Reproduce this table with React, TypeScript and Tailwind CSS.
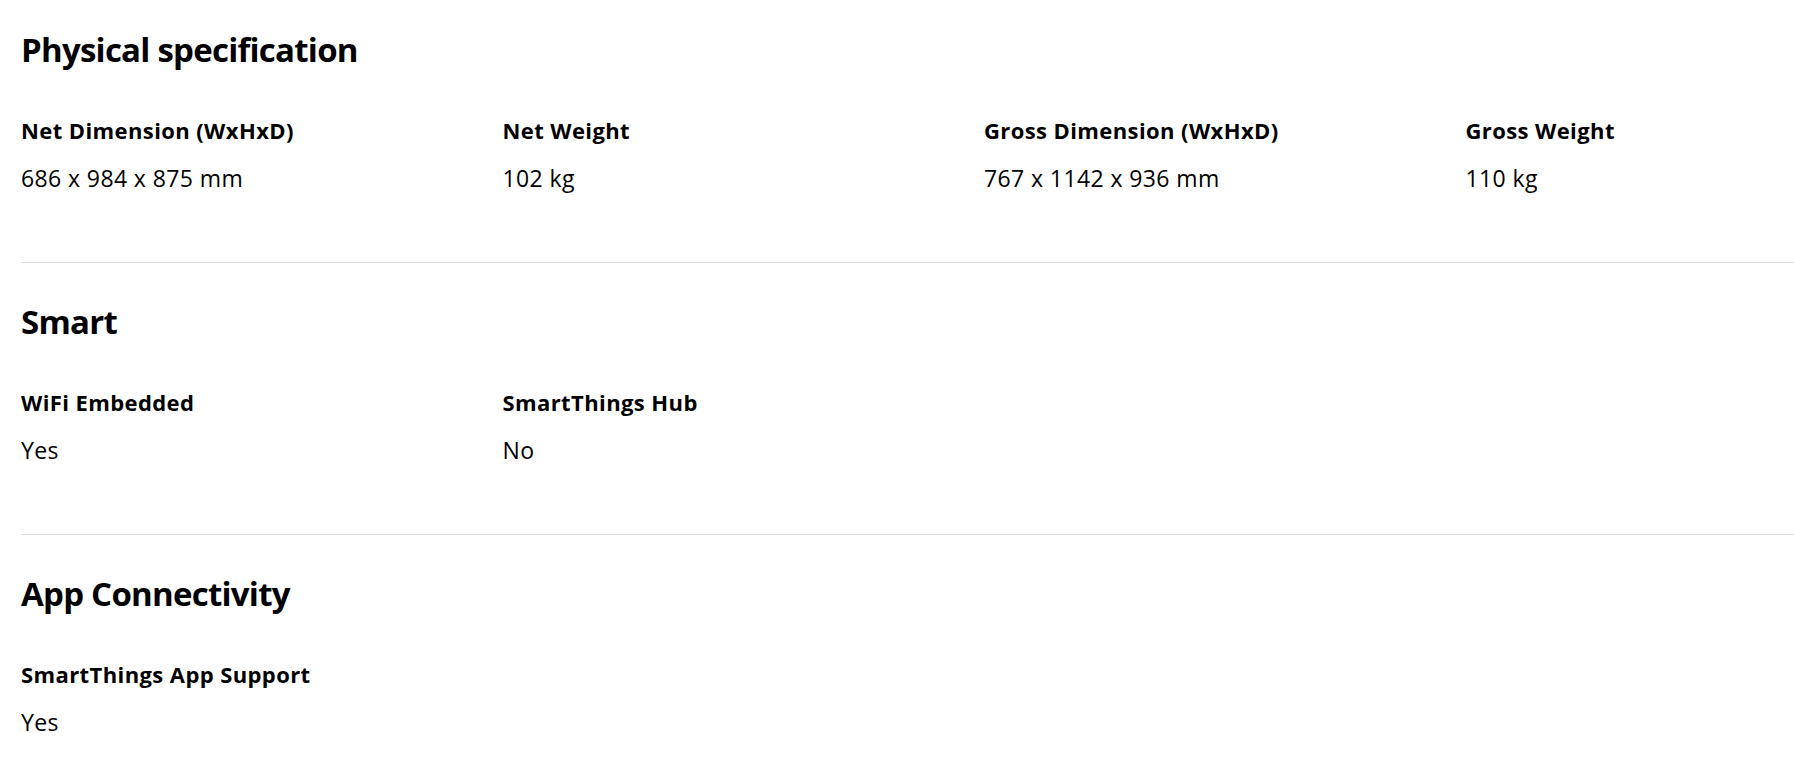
import React from "react";

type Spec = { label: string; value: string };
type Section = { title: string; specs: Spec[] };

const sections: Section[] = [
  {
    title: "Physical specification",
    specs: [
      { label: "Net Dimension (WxHxD)", value: "686 x 984 x 875 mm" },
      { label: "Net Weight", value: "102 kg" },
      { label: "Gross Dimension (WxHxD)", value: "767 x 1142 x 936 mm" },
      { label: "Gross Weight", value: "110 kg" },
    ],
  },
  {
    title: "Smart",
    specs: [
      { label: "WiFi Embedded", value: "Yes" },
      { label: "SmartThings Hub", value: "No" },
    ],
  },
  {
    title: "App Connectivity",
    specs: [{ label: "SmartThings App Support", value: "Yes" }],
  },
];

function SpecSection({ section, first }: { section: Section; first: boolean }) {
  return (
    <section
      className={
        first
          ? "pt-[30px] pb-[70px] border-b border-[#dddddd]"
          : "pt-[39px] pb-[70px] border-b border-[#dddddd]"
      }
    >
      <h2 className="text-[33px] leading-[40px] font-bold tracking-[-0.75px] text-black">
        {section.title}
      </h2>
      <div className="mt-[46px] grid grid-cols-[repeat(4,481.5px)]">
        {section.specs.map((s) => (
          <div key={s.label} className="flex flex-col gap-[20px]">
            <div className="text-[22px] leading-[28px] font-bold tracking-[0.4px] text-black whitespace-nowrap">
              {s.label}
            </div>
            <div className="text-[23px] leading-[28px] font-normal tracking-[0.4px] text-black whitespace-nowrap">
              {s.value}
            </div>
          </div>
        ))}
      </div>
    </section>
  );
}

export default function App() {
  return (
    <div className="w-full h-[764px] overflow-hidden bg-white font-['Open_Sans',sans-serif]">
      <div className="ml-[21px] w-[1926px]">
        {sections.map((s, i) => (
          <SpecSection key={s.title} section={s} first={i === 0} />
        ))}
      </div>
    </div>
  );
}
